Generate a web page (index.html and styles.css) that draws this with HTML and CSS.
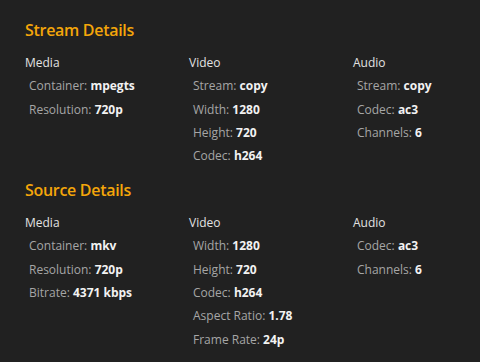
FILE: index.html
```html
<!DOCTYPE html>
<html lang="en">
<head>
    <meta charset="UTF-8">
    <meta name="viewport" content="width=device-width, initial-scale=1.0">
    <title>Media Info</title>
    <link rel="stylesheet" href="styles.css">
</head>
<body>
    <div class="details">
        <!-- what the transcoder sends out -->
        <section class="section">
            <h2 class="section-title">Stream Details</h2>
            <div class="columns">
                <div class="group">
                    <div class="group-title">Media</div>
                    <div class="item">Container: <b>mpegts</b></div>
                    <div class="item">Resolution: <b>720p</b></div>
                </div>
                <div class="group">
                    <div class="group-title">Video</div>
                    <div class="item">Stream: <b>copy</b></div>
                    <div class="item">Width: <b>1280</b></div>
                    <div class="item">Height: <b>720</b></div>
                    <div class="item">Codec: <b>h264</b></div>
                </div>
                <div class="group">
                    <div class="group-title">Audio</div>
                    <div class="item">Stream: <b>copy</b></div>
                    <div class="item">Codec: <b>ac3</b></div>
                    <div class="item">Channels: <b>6</b></div>
                </div>
            </div>
        </section>

        <!-- the original file -->
        <section class="section">
            <h2 class="section-title">Source Details</h2>
            <div class="columns">
                <div class="group">
                    <div class="group-title">Media</div>
                    <div class="item">Container: <b>mkv</b></div>
                    <div class="item">Resolution: <b>720p</b></div>
                    <div class="item">Bitrate: <b>4371 kbps</b></div>
                </div>
                <div class="group">
                    <div class="group-title">Video</div>
                    <div class="item">Width: <b>1280</b></div>
                    <div class="item">Height: <b>720</b></div>
                    <div class="item">Codec: <b>h264</b></div>
                    <div class="item">Aspect Ratio: <b>1.78</b></div>
                    <div class="item">Frame Rate: <b>24p</b></div>
                </div>
                <div class="group">
                    <div class="group-title">Audio</div>
                    <div class="item">Codec: <b>ac3</b></div>
                    <div class="item">Channels: <b>6</b></div>
                </div>
            </div>
        </section>
    </div>
</body>
</html>
```

FILE: styles.css
```css
body {
    font-family: 'Open Sans', 'Noto Sans', sans-serif;
    margin: 0;
    padding: 0;
    background-color: #212121;
    color: #eee;
}

.details {
    padding: 18px 25px 0;
}

.section + .section {
    margin-top: 10.5px;
}

.section-title {
    margin: 0 0 9px;
    font-size: 16px;
    font-weight: 600;
    letter-spacing: -0.3px;
    line-height: 24px;
    color: #f4a60a;
}

.columns {
    display: grid;
    grid-template-columns: 164px 164px 1fr;
}

.group-title {
    font-size: 12px;
    line-height: 23.33px;
    color: #e2e2e2;
}

.item {
    padding-left: 4px;
    font-size: 12px;
    line-height: 23.33px;
    color: #a6a6a6;
}

.item b {
    font-weight: 700;
    color: #f2f2f2;
}
```
